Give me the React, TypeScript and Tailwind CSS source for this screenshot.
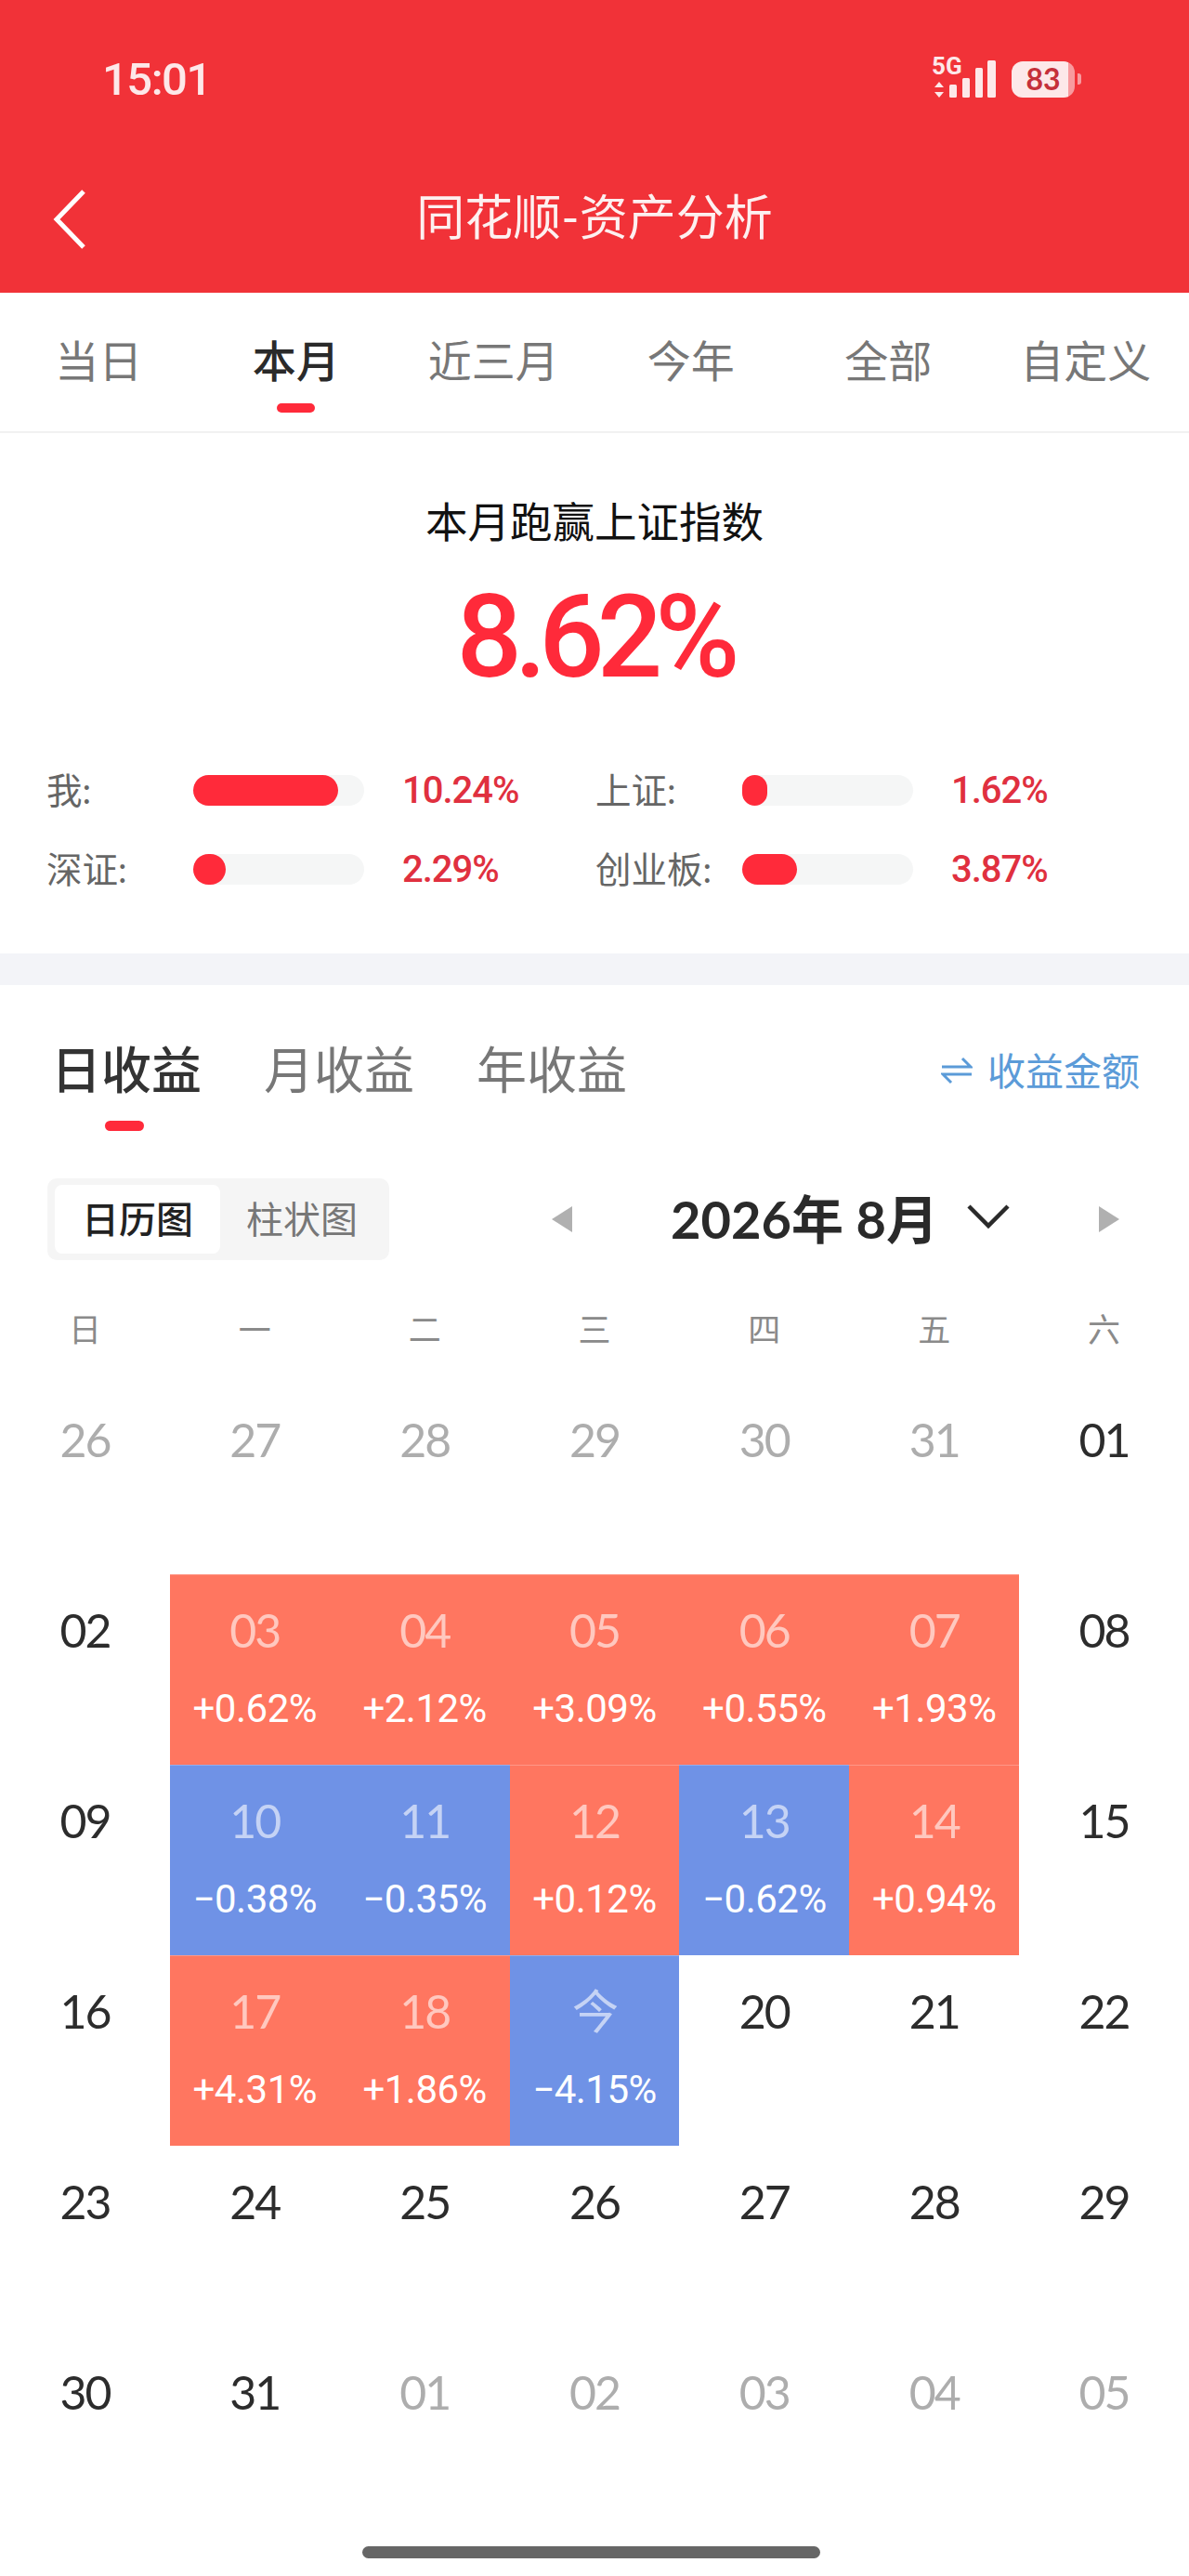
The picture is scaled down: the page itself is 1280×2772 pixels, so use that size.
type Cell = { day: string; kind?: 'muted' | 'up' | 'down'; pct?: string }

const muted = (day: string): Cell => ({ day, kind: 'muted' })
const plain = (day: string): Cell => ({ day })
const up = (day: string, pct: string): Cell => ({ day, kind: 'up', pct })
const down = (day: string, pct: string): Cell => ({ day, kind: 'down', pct })

const weekdays = ['日', '一', '二', '三', '四', '五', '六']

const cells: Cell[] = [
  muted('26'), muted('27'), muted('28'), muted('29'), muted('30'), muted('31'), plain('01'),
  plain('02'), up('03', '+0.62%'), up('04', '+2.12%'), up('05', '+3.09%'), up('06', '+0.55%'), up('07', '+1.93%'), plain('08'),
  plain('09'), down('10', '−0.38%'), down('11', '−0.35%'), up('12', '+0.12%'), down('13', '−0.62%'), up('14', '+0.94%'), plain('15'),
  plain('16'), up('17', '+4.31%'), up('18', '+1.86%'), down('今', '−4.15%'), plain('20'), plain('21'), plain('22'),
  plain('23'), plain('24'), plain('25'), plain('26'), plain('27'), plain('28'), plain('29'),
  plain('30'), plain('31'), muted('01'), muted('02'), muted('03'), muted('04'), muted('05')
]

const compare = [
  { label: '我:', fill: 156, value: '10.24%' },
  { label: '上证:', fill: 27, value: '1.62%' },
  { label: '深证:', fill: 35, value: '2.29%' },
  { label: '创业板:', fill: 59, value: '3.87%' }
]

const periods = ['当日', '本月', '近三月', '今年', '全部', '自定义']

function SignalIcon() {
  return (
    <svg width="70" height="60" viewBox="0 -14 70 60" className="-mt-[14px] text-[#fde8e9]" fill="currentColor">
      <text x="0" y="18" fontSize="26" fontWeight="700" fontFamily="Roboto, sans-serif">5G</text>
      <path d="M8 26l5 6H3zM8 43l-5-6h10z" />
      <rect x="19" y="29" width="8" height="14" rx="1.5" />
      <rect x="33" y="22" width="8" height="21" rx="1.5" />
      <rect x="47" y="11" width="8" height="32" rx="1.5" />
      <rect x="60" y="3" width="9" height="40" rx="1.5" />
    </svg>
  )
}

function Battery() {
  return (
    <div className="flex items-center">
      <div className="w-[68px] h-[39px] rounded-[12px] bg-[linear-gradient(to_right,#fde8e9_90%,#f89a9e_90%)] flex items-center justify-center text-[32px] leading-none font-bold text-[#c5303a]">
        83
      </div>
      <div className="ml-[3px] w-[4px] h-[12px] rounded-r-[3px] bg-[#f89a9e]" />
    </div>
  )
}

function Triangle({ right }: { right?: boolean }) {
  return (
    <svg width="22" height="28" viewBox="0 0 22 28" fill="#b0b0b0">
      <path d={right ? 'M0 0l22 14L0 28z' : 'M22 0L0 14l22 14z'} />
    </svg>
  )
}

function CalendarCell({ cell }: { cell: Cell }) {
  const bg =
    cell.kind === 'up'
      ? 'bg-[#ff7660] shadow-[inset_0_1px_0_rgba(255,255,255,0.25)]'
      : cell.kind === 'down'
        ? 'bg-[#6f92e6] shadow-[inset_0_1px_0_rgba(255,255,255,0.25)]'
        : ''
  const dayColor = cell.pct ? 'text-white/60' : cell.kind === 'muted' ? 'text-[#adadad]' : 'text-[#2c2c2c]'
  return (
    <div className={`h-[205px] pt-[30px] flex flex-col items-center ${bg}`}>
      <div className={`h-[60px] flex items-center text-[50px] tracking-[-2px] leading-none ${dayColor}`}>
        {cell.day}
      </div>
      {cell.pct && (
        <div className="mt-[25px] h-[60px] flex items-center text-[42px] font-normal tracking-[-0.5px] leading-none text-white font-[Roboto,sans-serif]">
          {cell.pct}
        </div>
      )}
    </div>
  )
}

export default function App() {
  return (
    <div className="w-[1280px] h-[2772px] overflow-hidden bg-white font-[Lato,'Noto_Sans_CJK_SC',sans-serif]">
      <header className="h-[315px] bg-[#f13238] text-white">
        <div className="h-[170px] pl-[110px] pr-[116px] flex items-center justify-between">
          <span className="text-[49px] leading-none font-medium text-[#fde8e9] tracking-[-1.5px] font-[Roboto,sans-serif]">15:01</span>
          <div className="flex items-center gap-[16px]">
            <SignalIcon />
            <Battery />
          </div>
        </div>
        <div className="h-[126px] px-[54px] grid grid-cols-[1fr_auto_1fr] items-center">
          <svg width="44" height="66" viewBox="0 0 44 66" fill="none" stroke="white" strokeWidth="5" className="mt-[6px]">
            <path d="M36 3L7 33l29 30" />
          </svg>
          <h1 className="text-[52px] leading-none text-[#fdf0f0] font-normal">同花顺-资产分析</h1>
          <div />
        </div>
      </header>

      <nav className="h-[151px] pr-[5px] border-b-2 border-[#f1f1f1] grid grid-cols-6">
        {periods.map((p, i) => (
          <div key={p} className="flex flex-col items-center">
            <div className={`mt-[45px] h-[56px] flex items-center text-[47px] leading-none ${i === 1 ? 'text-[#2a2a2a] font-medium' : 'text-[#777777]'}`}>
              {p}
            </div>
            {i === 1 && <div className="mt-[18px] w-[41px] h-[10px] rounded-full bg-[#ff2a3a]" />}
          </div>
        ))}
      </nav>

      <section className="h-[560px] pt-[68px] pl-[50px]">
        <div className="-ml-[50px] flex flex-col items-center">
          <h2 className="h-[56px] flex items-center text-[45.5px] leading-none text-[#111111] font-normal">本月跑赢上证指数</h2>
          <div className="mt-[38px] h-[115px] flex items-center text-[124px] leading-none font-medium text-[#ff2a3a] tracking-[-8px] font-[Roboto,sans-serif]">
            8.62%
          </div>
        </div>
        <div className="mt-[91px] w-[1182px] grid grid-cols-2 gap-y-[52px]">
          {compare.map((c) => (
            <div key={c.label} className="h-[33px] flex items-center">
              <span className="w-[158px] text-[38.5px] leading-none text-[#666666]">{c.label}</span>
              <div className="w-[184px] h-[33px] rounded-full bg-[#f5f6f6]">
                <div className="h-full rounded-full bg-[#ff2a3a]" style={{ width: c.fill }} />
              </div>
              <span className="ml-[41px] text-[40px] leading-none font-medium text-[#e0303f] tracking-[-1px] font-[Roboto,sans-serif]">{c.value}</span>
            </div>
          ))}
        </div>
      </section>

      <div className="h-[34px] bg-[#f3f4f8]" />

      <section className="h-[296px] pt-[64px] pl-[55px] pr-[53px]">
        <div className="flex items-start justify-between">
          <div className="flex gap-[67px]">
            <div className="flex flex-col items-center">
              <div className="h-[56px] flex items-center text-[54px] leading-none font-medium text-[#333333]">日收益</div>
              <div className="mt-[26px] mr-[5px] w-[42px] h-[11px] rounded-full bg-[#ff2a3a]" />
            </div>
            <div className="h-[56px] flex items-center text-[54px] leading-none text-[#777777]">月收益</div>
            <div className="h-[56px] flex items-center text-[54px] leading-none text-[#777777]">年收益</div>
          </div>
          <div className="h-[56px] flex items-center gap-[16px] text-[41px] leading-none text-[#5b9bd8]">
            <svg width="34" height="32" viewBox="0 0 34 32" fill="none" stroke="currentColor" strokeWidth="3">
              <path d="M1 12h31L23 3M33 20H2l9 9" />
            </svg>
            收益金额
          </div>
        </div>
        <div className="mt-[51px] -ml-[4px] flex items-center">
          <div className="w-[368px] h-[88px] py-[7px] pl-[8px] rounded-[10px] bg-[#f5f5f5] flex items-center">
            <div className="w-[178px] h-[74px] rounded-[8px] bg-white flex items-center justify-center text-[40px] leading-none font-medium text-[#222222]">
              日历图
            </div>
            <div className="ml-[28px] text-[40px] leading-none text-[#777777]">柱状图</div>
          </div>
          <div className="ml-[175px]"><Triangle /></div>
          <div className="ml-[106px] w-[286px] text-[56px] leading-none font-bold text-[#2a2a2a] whitespace-pre">2026年 8月</div>
          <svg width="46" height="28" viewBox="0 0 46 28" fill="none" stroke="#2a2a2a" strokeWidth="4.5" className="ml-[33px] -mt-[6px]">
            <path d="M2 3l21 21L44 3" />
          </svg>
          <div className="ml-[96px]"><Triangle right /></div>
        </div>
      </section>

      <div className="mt-[44px] h-[60px] mb-[29px] grid grid-cols-7">
        {weekdays.map((w) => (
          <div key={w} className="flex items-center justify-center text-[35px] leading-none text-[#8a8a8a]">{w}</div>
        ))}
      </div>

      <div className="grid grid-cols-7">
        {cells.map((cell, i) => (
          <CalendarCell key={i} cell={cell} />
        ))}
      </div>

      <div className="mt-[21px] ml-[390px] w-[493px] h-[13px] rounded-full bg-[#666666]" />
    </div>
  )
}
